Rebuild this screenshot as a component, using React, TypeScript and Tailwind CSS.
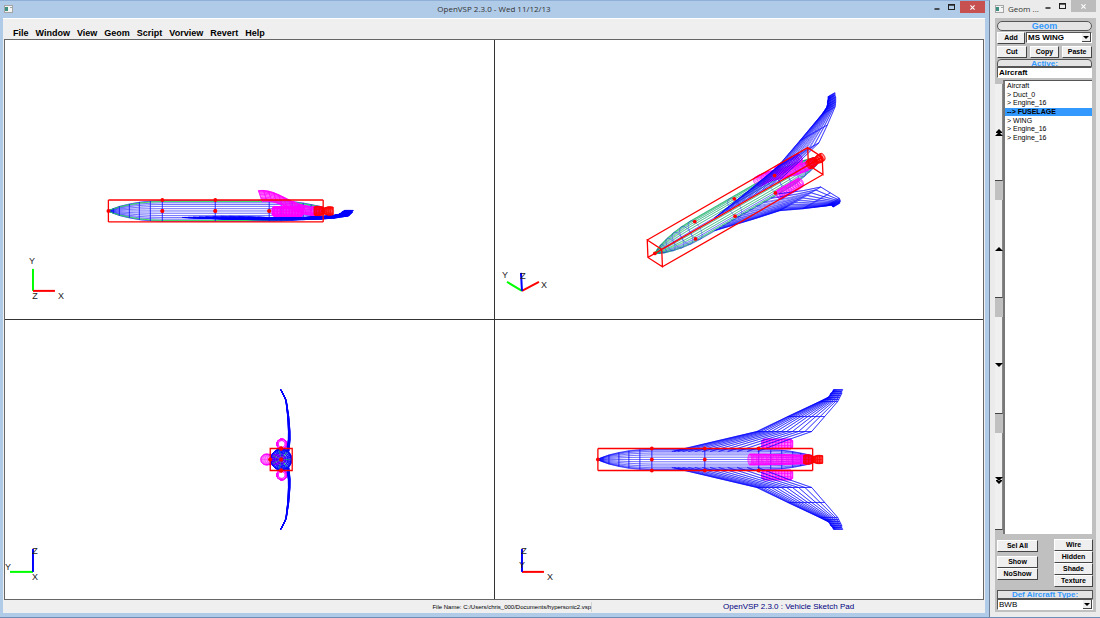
import { useState } from "react";
import type { ReactNode } from "react";
import clsx from "clsx";

type Vec = [number, number, number];
type Project = (p: Vec) => [number, number];
// x position, y centre, z centre, radius
type Station = [number, number, number, number];

const BLUE = "#0000ff";
const GREEN = "#22dd44";
const MAGENTA = "#ff00ff";
const RED = "#ff0000";

const projections: Record<string, Project> = {
  side: ([x, y]) => [108.5 + x, 211 - y],
  iso: ([x, y, z]) => [
    655 + 0.747 * x - 0.66 * y - 0.035 * z,
    253.5 - 0.43 * x - 0.43 * y - 0.79 * z,
  ],
  front: ([, y, z]) => [281.5 - y, 459.5 - z],
  top: ([x, , z]) => [598 + x, 459.5 - z],
};

// longitudinal lines drawn green, out of 28
const greenLines: Record<string, number[]> = {
  side: [2, 12, 16, 26],
  iso: [1, 3, 5, 7, 9, 11, 13, 15, 19, 23, 27],
  front: [2, 6, 10, 14, 18, 22, 26],
  top: [],
};

const fuselage: Station[] = [
  [0, 0, 0, 0.3],
  [5, 0, 0, 2.4],
  [11, 0, 0, 4.6],
  [21, 0, 0, 7],
  [31, 0, 0, 8.8],
  [42, 0, 0, 10],
  [54, 0, 0, 10.5],
  [107, 0, 0, 10.5],
  [161, 0, 0, 10.5],
  [173, 0, 0, 10.2],
  [184, 0, 0, 9.5],
  [195, 0, 0, 8],
  [203, 0, 0, 6.5],
  [215, 0, 0, 4],
];

// tilt leans the inlet end backwards
const duct: Station[] = [
  [152, 15, 0, 5.4],
  [157, 15.2, 0, 5.4],
  [162, 14.6, 0, 5.3],
  [167, 13.2, 0, 5.3],
  [172, 11.2, 0, 5.2],
  [177, 8.8, 0, 5.2],
  [182, 6.4, 0, 5],
  [187, 4.2, 0, 5],
  [192, 2.4, 0, 4.8],
  [197, 1, 0, 4.6],
  [203, 0, 0, 4.4],
];

const nacelle = (z: number): Station[] =>
  [164, 166, 169, 172, 175, 178, 181, 184, 187, 190, 193, 195].map((x, i) => [
    x,
    -0.5,
    z,
    i === 0 || i === 11 ? 3.4 : 5,
  ]);

const core: Station[] = [
  [203, 0, 0, 4.2],
  [206, 0, 0, 4.6],
  [209, 0, 0, 4.6],
  [212, 0, 0, 4.4],
  [215, 0, 0, 3.4],
];

const nozzle: Station[] = [
  [206, 0, 0, 4],
  [208, 0, 0, 4.6],
  [211, 0, 0, 4.6],
  [214, 0, 0, 4],
  [216, 0, 0, 3],
  [218, 0, 0, 3.6],
  [220, 0, 0, 4.2],
  [222, 0, 0, 4.2],
  [225, 0, 0, 3.8],
];

// span, leading edge, trailing edge, height
const wing = [
  [8, 74, 160, -6.5],
  [20, 125, 191, -8],
  [28, 159, 214, -8],
  [43, 190, 227, -7],
  [58, 222, 240, -5],
  [60, 226, 241, -4.4],
  [62, 230, 242, -3.6],
  [64, 232, 243, -2.6],
  [66, 233, 244, -1.6],
  [68, 235, 244, -0.6],
  [70, 236, 245, 0.5],
];

const marks: Vec[] = [
  [0, 0, 0],
  ...[54, 107, 161].flatMap((x): Vec[] => [
    [x, 0, 11],
    [x, 0, -11],
  ]),
  [215, 0, 0],
];

function toPath(points: Vec[], project: Project, close = false) {
  const d = points
    .map(project)
    .map(([x, y], i) => `${i ? "L" : "M"}${x.toFixed(1)} ${y.toFixed(1)}`)
    .join("");
  return close ? d + "Z" : d;
}

function ring([x, y, z, r]: Station, sides: number, tilt = 0): Vec[] {
  return Array.from({ length: sides }, (_, i) => {
    const a = (i / sides) * Math.PI * 2;
    return [
      x - tilt * r * Math.cos(a),
      y + r * Math.cos(a),
      z + r * Math.sin(a),
    ];
  });
}

function Tube({
  stations,
  project,
  color,
  sides = 20,
  stroke = 0.6,
  tilt,
}: {
  stations: Station[];
  project: Project;
  color: string;
  sides?: number;
  stroke?: number;
  tilt?: number;
}) {
  const rings = stations.map((s) => ring(s, sides, tilt));
  const d =
    rings.map((r) => toPath(r, project, true)).join("") +
    Array.from({ length: sides }, (_, i) =>
      toPath(rings.map((r) => r[i]), project),
    ).join("");
  return <path d={d} fill="none" stroke={color} strokeWidth={stroke} />;
}

function Fuselage({ view }: { view: string }) {
  const project = projections[view];
  const greens = greenLines[view];
  const rings = fuselage.map((s) => ring(s, 28));
  const line = (i: number) => toPath(rings.map((r) => r[i]), project);
  const blues = rings[0].map((_, i) => i).filter((i) => !greens.includes(i));
  return (
    <g fill="none" strokeWidth={0.6}>
      <path d={blues.map(line).join("")} stroke={BLUE} opacity={0.55} />
      <path d={greens.map(line).join("")} stroke={GREEN} />
      <path
        d={rings.map((r) => toPath(r, project, true)).join("")}
        stroke={BLUE}
        opacity={view === "iso" ? 0.6 : 0.8}
      />
    </g>
  );
}

function Wing({ project, mirror }: { project: Project; mirror: 1 | -1 }) {
  const at = (s: number[], t: number, side: number): Vec => [
    s[1] + (s[2] - s[1]) * t,
    s[3] + side * (s[2] - s[1]) * 0.014 * Math.sin(Math.PI * t),
    s[0] * mirror,
  ];
  const chord = Array.from({ length: 13 }, (_, i) => Math.pow(i / 12, 1.5));
  const d = [1, -1]
    .flatMap((side) => [
      ...chord.map((t) => toPath(wing.map((s) => at(s, t, side)), project)),
      ...wing
        .slice(2)
        .map((s) => toPath(chord.map((t) => at(s, t, side)), project)),
    ])
    .join("");
  return <path d={d} fill="none" stroke={BLUE} strokeWidth={0.5} />;
}

function BoundingBox({ project }: { project: Project }) {
  const face = (x: number): Vec[] => [
    [x, 11, 11],
    [x, -11, 11],
    [x, -11, -11],
    [x, 11, -11],
  ];
  const a = face(0);
  const b = face(215);
  const d =
    toPath(a, project, true) +
    toPath(b, project, true) +
    a.map((p, i) => toPath([p, b[i]], project)).join("");
  return <path d={d} fill="none" stroke={RED} strokeWidth={1.3} />;
}

function Aircraft({ view }: { view: string }) {
  const project = projections[view];
  const points: Vec[] =
    view === "iso"
      ? marks
      : [...marks, ...[54, 107].map((x): Vec => [x, 11, 0])];
  return (
    <g>
      <Fuselage view={view} />
      <Tube stations={duct} project={project} color={MAGENTA} sides={24} tilt={0.35} />
      <Tube stations={nacelle(15.5)} project={project} color={MAGENTA} />
      <Tube stations={nacelle(-15.5)} project={project} color={MAGENTA} />
      <Tube stations={core} project={project} color={MAGENTA} />
      <Wing project={project} mirror={1} />
      <Wing project={project} mirror={-1} />
      {view === "front" ? (
        <Fuselage view={view} />
      ) : (
        <Tube stations={nozzle} project={project} color={RED} stroke={0.7} />
      )}
      <BoundingBox project={project} />
      {points.map((p, i) => {
        const [cx, cy] = project(p);
        return <circle key={i} cx={cx} cy={cy} r={1.9} fill={RED} />;
      })}
    </g>
  );
}

type Axis = { to: [number, number]; color: string };
type AxisLabel = { text: string; at: [number, number] };

function Triad({
  origin,
  axes,
  labels,
}: {
  origin: [number, number];
  axes: Axis[];
  labels: AxisLabel[];
}) {
  return (
    <g>
      {axes.map(({ to, color }) => (
        <line
          key={color}
          x1={origin[0]}
          y1={origin[1]}
          x2={to[0]}
          y2={to[1]}
          stroke={color}
          strokeWidth={2}
        />
      ))}
      {labels.map(({ text, at }) => (
        <text
          key={text}
          x={at[0]}
          y={at[1]}
          textAnchor="middle"
          className="fill-[#222] text-[9px]"
        >
          {text}
        </text>
      ))}
    </g>
  );
}

function Viewport({
  box,
  view,
  children,
}: {
  box: string;
  view: string;
  children: ReactNode;
}) {
  return (
    <div className="min-h-0 min-w-0 bg-white">
      <svg viewBox={box} className="block h-full w-full">
        <Aircraft view={view} />
        {children}
      </svg>
    </div>
  );
}

function AppIcon() {
  return (
    <svg viewBox="0 0 9 8" className="h-2 w-[9px]">
      <rect x="0.5" y="0.5" width="8" height="7" fill="#f4f4f4" stroke="#a5a5a5" />
      <rect x="1" y="2" width="3" height="4" fill="#3d8f80" />
      <rect x="6" y="2" width="2" height="1" fill="#9aa" />
    </svg>
  );
}

function WindowButtons({ active }: { active?: boolean }) {
  return (
    <div className="flex h-3 shrink-0 text-[#222]">
      <button aria-label="Minimize" className="flex w-[15px] items-center justify-center">
        <svg viewBox="0 0 6 8" className="h-2 w-1.5">
          <path d="M0.5 6H5.5" stroke="currentColor" strokeWidth="1.5" />
        </svg>
      </button>
      <button aria-label="Maximize" className="flex w-[15px] items-center justify-center">
        <svg viewBox="0 0 7 6" className="h-1.5 w-[7px]">
          <rect x="0.5" y="0.5" width="6" height="5" fill="none" stroke="currentColor" />
          <path d="M0.5 1H6.5" stroke="currentColor" strokeWidth="1.4" />
        </svg>
      </button>
      <button
        aria-label="Close"
        className={clsx(
          "ml-px flex w-[25px] items-center justify-center",
          active ? "bg-[#c75050]" : "bg-[#bcbcbc]",
        )}
      >
        <svg viewBox="0 0 6 6" className="h-[5px] w-[5px]">
          <path d="M0.5 0.5L5.5 5.5M5.5 0.5L0.5 5.5" stroke="#fff" strokeWidth="1.3" />
        </svg>
      </button>
    </div>
  );
}

function PushButton({
  children,
  className,
}: {
  children: ReactNode;
  className?: string;
}) {
  return (
    <button
      className={clsx(
        "h-3 border border-t-white border-r-[#444] border-b-[#444] border-l-white bg-[#efefef] text-center text-[7px] leading-[10px] font-bold whitespace-nowrap",
        className,
      )}
    >
      {children}
    </button>
  );
}

function Dropdown({
  id,
  options,
  bold,
}: {
  id: string;
  options: string[];
  bold?: boolean;
}) {
  return (
    <div className="relative min-w-0 flex-1">
      <select
        id={id}
        className={clsx(
          "block h-[11px] w-full appearance-none border border-t-[#555] border-r-white border-b-white border-l-[#555] bg-white pl-px text-[8px] leading-[9px] outline-none",
          bold && "font-bold",
        )}
      >
        {options.map((o) => (
          <option key={o}>{o}</option>
        ))}
      </select>
      <span className="pointer-events-none absolute top-px right-px flex h-[9px] w-[9px] items-center justify-center border-r border-b border-[#444] bg-[#efefef]">
        <svg viewBox="0 0 6 3" className="h-[3px] w-1.5">
          <path d="M0 0H6L3 3Z" />
        </svg>
      </span>
    </div>
  );
}

const scrollers = [
  { label: "Move to top", d: "M4 0L7 3H1ZM4 3L8 7H0ZM1 3H7V4H1Z" },
  { label: "Move up", d: "M4 2L8 6H0Z" },
  { label: "Move down", d: "M4 6L8 2H0Z" },
  { label: "Move to bottom", d: "M4 4L8 0H0ZM4 7L7 4H1ZM1 3H7V4H1Z" },
];

const menus = ["File", "Window", "View", "Geom", "Script", "Vorview", "Revert", "Help"];

const geoms = [
  "Aircraft",
  "> Duct_0",
  "> Engine_16",
  "--> FUSELAGE",
  "> WING",
  "> Engine_16",
  "> Engine_16",
];

function MainWindow() {
  return (
    <main className="flex min-w-0 flex-1 flex-col border-t border-r border-t-[#8fafd6] border-r-[#6f7f95] bg-[#b0cbe8] pr-1 pb-1 pl-[3px]">
      <header className="flex h-[17px] shrink-0 items-start">
        <div className="w-[80px] pt-1 pl-px">
          <AppIcon />
        </div>
        <h1 className="flex-1 pt-px text-center font-['Open_Sans',sans-serif] text-[8px] leading-[14px] text-[#333]">
          OpenVSP 2.3.0 - Wed 11/12/13
        </h1>
        <div className="flex w-[80px] justify-end">
          <WindowButtons active />
        </div>
      </header>
      <nav className="flex h-[21px] shrink-0 items-end gap-[7px] border-t border-white bg-[#efefef] pl-[10px] text-[9px] leading-3 font-bold">
        {menus.map((m) => (
          <button key={m}>{m}</button>
        ))}
      </nav>
      <div className="flex min-h-0 flex-1 bg-[#efefef] px-px">
        <div className="grid min-h-0 flex-1 grid-cols-2 grid-rows-2 gap-px border border-[#666] bg-[#333]">
          <Viewport box="5 40 489 279" view="side">
            <Triad
              origin={[33, 291]}
              axes={[
                { to: [33, 269], color: "#00ff00" },
                { to: [55, 291], color: RED },
              ]}
              labels={[
                { text: "Y", at: [32, 264] },
                { text: "Z", at: [35, 299] },
                { text: "X", at: [61, 299] },
              ]}
            />
          </Viewport>
          <Viewport box="495 40 489 279" view="iso">
            <Triad
              origin={[522, 291]}
              axes={[
                { to: [539, 282], color: RED },
                { to: [507, 282], color: "#00ff00" },
                { to: [521, 273], color: BLUE },
              ]}
              labels={[
                { text: "Y", at: [505, 278] },
                { text: "Z", at: [523, 279] },
                { text: "X", at: [544, 288] },
              ]}
            />
          </Viewport>
          <Viewport box="5 320 489 279" view="front">
            <Triad
              origin={[33, 572]}
              axes={[
                { to: [10, 572], color: "#00ff00" },
                { to: [33, 549], color: BLUE },
              ]}
              labels={[
                { text: "Y", at: [8, 570] },
                { text: "Z", at: [35, 554] },
                { text: "X", at: [35, 580] },
              ]}
            />
          </Viewport>
          <Viewport box="495 320 489 279" view="top">
            <Triad
              origin={[522, 572]}
              axes={[
                { to: [544, 572], color: RED },
                { to: [522, 549], color: BLUE },
              ]}
              labels={[
                { text: "Z", at: [524, 554] },
                { text: "Y", at: [522, 568] },
                { text: "X", at: [550, 580] },
              ]}
            />
          </Viewport>
        </div>
      </div>
      <footer className="flex h-[13px] shrink-0 items-center bg-[#efefef] leading-[10px]">
        <p className="w-3/5 border-r border-[#d4d4d4] text-right text-[6px]">
          File Name: C:/Users/chris_000/Documents/hypersonic2.vsp
        </p>
        <p className="flex-1 text-center text-[8px] text-[#000080]">
          OpenVSP 2.3.0 : Vehicle Sketch Pad
        </p>
      </footer>
    </main>
  );
}

function GeomPanel() {
  const [selected, setSelected] = useState(3);
  const [active, setActive] = useState("Aircraft");

  return (
    <aside className="flex w-[110px] shrink-0 flex-col bg-[#ebebeb] pr-1 pb-[5px] pl-[5px]">
      <header className="flex h-[18px] shrink-0 items-start">
        <div className="pt-[5px]">
          <AppIcon />
        </div>
        <h2 className="min-w-0 flex-1 pt-0.5 pl-1 font-['Open_Sans',sans-serif] text-[8px] leading-[14px] whitespace-nowrap text-[#333]">
          Geom ...
        </h2>
        <WindowButtons />
      </header>
      <div className="flex min-h-0 flex-1 flex-col bg-[#c0c0c0] pt-[3px] pr-1">
        <div className="pl-0.5">
          <label
            htmlFor="geom-type"
            className="block h-[10px] rounded-full border border-[#555] bg-[#e4e4e4] text-center text-[9px] leading-[9px] font-bold text-[#3399ff]"
          >
            Geom
          </label>
          <div className="mt-px flex gap-px">
            <PushButton className="w-7">Add</PushButton>
            <Dropdown id="geom-type" options={["MS WING"]} bold />
          </div>
          <div className="mt-[2px] grid grid-cols-3 gap-[3px]">
            <PushButton>Cut</PushButton>
            <PushButton>Copy</PushButton>
            <PushButton>Paste</PushButton>
          </div>
          <label
            htmlFor="active-geom"
            className="mt-px block h-2 rounded-t border border-[#555] bg-[#e4e4e4] text-center text-[8px] leading-[7px] font-bold text-[#3399ff]"
          >
            Active:
          </label>
          <input
            id="active-geom"
            value={active}
            onChange={(e) => setActive(e.target.value)}
            className="block h-[11px] w-full border border-t-[#555] border-r-white border-b-white border-l-[#555] bg-white pl-px text-[8px] leading-[9px] font-bold outline-none"
          />
        </div>
        <div className="mt-[2px] flex min-h-0 flex-1">
          <div className="mt-1 mb-1 flex w-2 flex-col gap-[19px]">
            {scrollers.map((s) => (
              <button
                key={s.label}
                aria-label={s.label}
                className="flex flex-1 items-center justify-center border-r border-b border-r-[#888] border-b-[#444] bg-[#f0f0f0]"
              >
                <svg viewBox="0 0 8 7" className="h-[7px] w-2 shrink-0">
                  <path d={s.d} />
                </svg>
              </button>
            ))}
          </div>
          <div className="min-w-0 flex-1 border-t border-l-2 border-t-[#555] border-l-[#777] bg-white">
            <ul className="mt-px grid h-[60px] auto-rows-fr text-[7px] leading-[8px]">
              {geoms.map((g, i) => (
                <li
                  key={i}
                  className={clsx(
                    "flex items-center pl-0.5",
                    i === selected && "bg-[#3399ff] font-bold",
                  )}
                >
                  <button
                    className="w-full text-left whitespace-nowrap"
                    onClick={() => setSelected(i)}
                  >
                    {g}
                  </button>
                </li>
              ))}
            </ul>
          </div>
        </div>
        <div className="mt-[5px] -mr-px flex justify-between pl-0.5">
          <div className="flex w-[41px] flex-col pt-px">
            <PushButton>Sel All</PushButton>
            <PushButton className="mt-1">Show</PushButton>
            <PushButton>NoShow</PushButton>
          </div>
          <div className="flex w-[39px] flex-col">
            <PushButton>Wire</PushButton>
            <PushButton>Hidden</PushButton>
            <PushButton>Shade</PushButton>
            <PushButton>Texture</PushButton>
          </div>
        </div>
        <div className="mt-[3px] -mr-px mb-[2px] pl-0.5">
          <label
            htmlFor="aircraft-type"
            className="block h-[9px] overflow-hidden border border-[#555] bg-[#e4e4e4] text-center text-[8px] leading-[8px] font-bold whitespace-nowrap text-[#3399ff]"
          >
            Def Aircraft Type:
          </label>
          <Dropdown id="aircraft-type" options={["BWB"]} />
        </div>
      </div>
    </aside>
  );
}

export default function App() {
  return (
    <div className="flex h-screen border-b border-[#6c8db5] bg-[#ebebeb] font-['Liberation_Sans',Arial,sans-serif] text-black">
      <MainWindow />
      <GeomPanel />
    </div>
  );
}
